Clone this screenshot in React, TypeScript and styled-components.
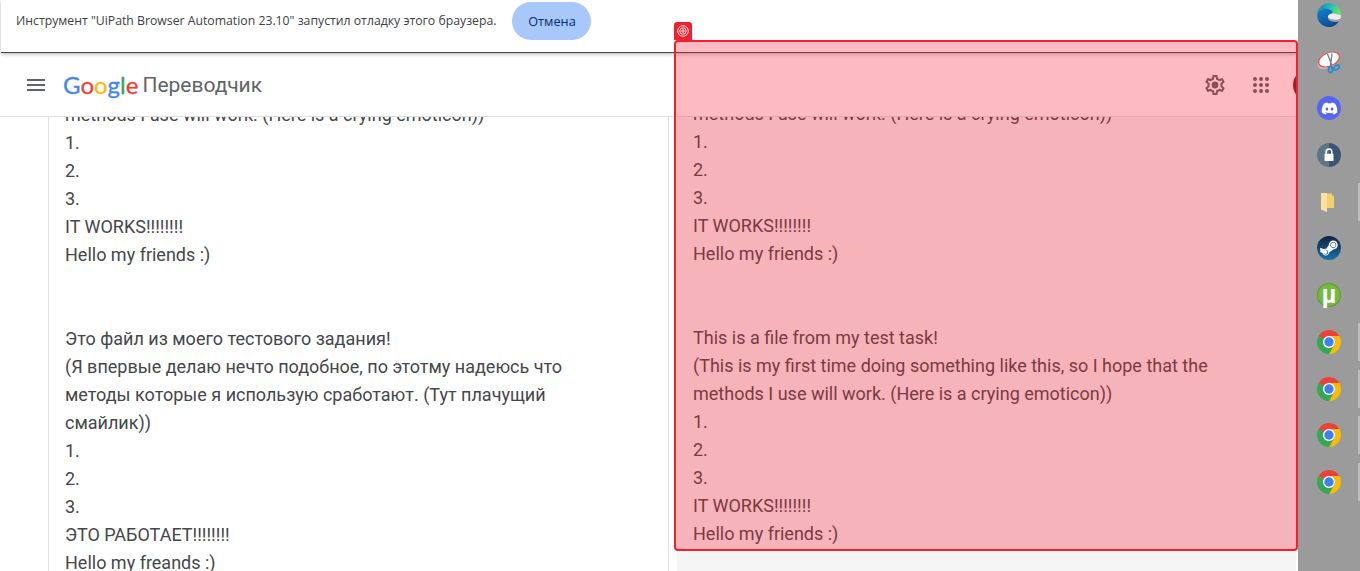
import React from "react"
import styled, { createGlobalStyle } from "styled-components"
import { FaDiscord, FaSteamSymbol } from "react-icons/fa"

const sourceText = `methods I use will work. (Here is a crying emoticon))
1.
2.
3.
IT WORKS!!!!!!!!
Hello my friends :)


Это файл из моего тестового задания!
(Я впервые делаю нечто подобное, по этотму надеюсь что методы которые я использую сработают. (Тут плачущий смайлик))
1.
2.
3.
ЭТО РАБОТАЕТ!!!!!!!!
Hello my freands :)`

const resultText = `methods I use will work. (Here is a crying emoticon))
1.
2.
3.
IT WORKS!!!!!!!!
Hello my friends :)


This is a file from my test task!
(This is my first time doing something like this, so I hope that the methods I use will work. (Here is a crying emoticon))
1.
2.
3.
IT WORKS!!!!!!!!
Hello my friends :)`

function Chrome() {
  return (
    <svg viewBox="0 0 24 24" width={24} height={24}>
      <path fill="#ea4335" d="M12 0A12 12 0 0 1 22.39 6H12A6 6 0 0 0 6.8 9L1.61 6A12 12 0 0 1 12 0Z" />
      <path fill="#fbbc04" d="M22.39 6A12 12 0 0 1 12 24L17.2 15A6 6 0 0 0 12 6Z" />
      <path fill="#34a853" d="M1.61 6A12 12 0 0 0 12 24L17.2 15A6 6 0 0 1 6.8 9Z" />
      <circle cx="12" cy="12" r="6" fill="#fff" />
      <circle cx="12" cy="12" r="4.7" fill="#3f80f0" />
    </svg>
  )
}

function Edge() {
  return (
    <svg viewBox="0 0 24 24" width={24} height={24}>
      <defs>
        <linearGradient id="edgeTop" x1="0" y1="0.2" x2="1" y2="0.6">
          <stop offset="0" stopColor="#1a7fb8" />
          <stop offset="0.55" stopColor="#2cc4b4" />
          <stop offset="1" stopColor="#74e25a" />
        </linearGradient>
        <linearGradient id="edgeLow" x1="0" y1="0" x2="0.6" y2="1">
          <stop offset="0" stopColor="#0f86d0" />
          <stop offset="1" stopColor="#0b4a92" />
        </linearGradient>
      </defs>
      <path fill="url(#edgeTop)" d="M12 0A12 12 0 0 1 24 12.5L10 13 .4 9.5A12 12 0 0 1 12 0Z" />
      <path fill="#e9eceb" d="M10.5 13C11.5 10 16 9.5 19 11L24 12.2 23.6 15.2C21.5 16.6 19 17.2 16.5 16.6 13.5 16.4 11 15.4 10.5 13Z" />
      <path fill="url(#edgeLow)" d="M0.2 11.5C1 7 6 4.8 10.5 5.8 15 6.8 16.6 9 15 10.2 12.5 10.6 11 12 10.8 14 10.6 17 13.4 19 18 19 19.6 19 21 18.6 22 18 19.8 22 16 24 12 24 5 24 -.2 18.4 0.2 11.5Z" />
    </svg>
  )
}

function Snip() {
  return (
    <svg viewBox="0 0 24 24" width={24} height={24}>
      <ellipse cx="10.5" cy="12" rx="10.5" ry="6.4" transform="rotate(-24 10.5 12)" fill="#c9bdbd" />
      <ellipse cx="12" cy="9.5" rx="11" ry="6.6" transform="rotate(-24 12 9.5)" fill="#fff" stroke="#e0564e" strokeWidth="1.2" />
      <path d="M10.5 4L15 15.5M15 3.5L13.5 15.5" stroke="#77797c" strokeWidth="1.3" fill="none" />
      <ellipse cx="13.4" cy="19.6" rx="2" ry="3" fill="none" stroke="#1f8ad6" strokeWidth="1.6" />
      <ellipse cx="19.4" cy="17.6" rx="3.2" ry="2" transform="rotate(-30 19.4 17.6)" fill="none" stroke="#1f8ad6" strokeWidth="1.6" />
    </svg>
  )
}

function Lock() {
  return (
    <svg viewBox="0 0 24 24" width={24} height={24}>
      <path fill="#5f7389" d="M12 0a12 12 0 0 0 0 24Z" />
      <path fill="#3b5570" d="M12 0a12 12 0 0 1 0 24Z" />
      <path fill="none" stroke="#fff" strokeWidth="1.6" d="M9.2 11V8.8a2.8 2.8 0 0 1 5.6 0V11" />
      <rect x="7.5" y="10.8" width="9" height="7.2" rx="0.8" fill="#fff" />
    </svg>
  )
}

function Folder() {
  return (
    <svg viewBox="0 0 24 24" width={24} height={24}>
      <path fill="#f3d06f" d="M9 3.5H15L15.5 6H17V18H9Z" />
      <path fill="#fbe39b" d="M4 3H10V22L4 19.5Z" />
    </svg>
  )
}

function Target() {
  return (
    <svg viewBox="0 0 12 12" width={12} height={12} fill="none" stroke="#fff" strokeWidth="0.9">
      <circle cx="6" cy="6" r="5.3" />
      <circle cx="6" cy="6" r="3.2" />
      <circle cx="6" cy="6" r="1.2" />
    </svg>
  )
}

export default function App() {
  return (
    <Desktop>
      <GlobalStyle />
      <Browser>
        <InfoBar>
          <InfoText>Инструмент "UiPath Browser Automation 23.10" запустил отладку этого браузера.</InfoText>
          <CancelButton>Отмена</CancelButton>
        </InfoBar>
        <Header>
          <MenuButton aria-label="Меню">
            <svg viewBox="0 0 18 12" width={18} height={12} fill="#5f6368">
              <rect y="0" width="18" height="2" />
              <rect y="5" width="18" height="2" />
              <rect y="10" width="18" height="2" />
            </svg>
          </MenuButton>
          <Logo>
            <LogoLetter $color="#4285f4">G</LogoLetter>
            <LogoLetter $color="#ea4335">o</LogoLetter>
            <LogoLetter $color="#fbbc05">o</LogoLetter>
            <LogoLetter $color="#4285f4">g</LogoLetter>
            <LogoLetter $color="#34a853">l</LogoLetter>
            <LogoLetter $color="#ea4335">e</LogoLetter>
          </Logo>
          <ProductName>Переводчик</ProductName>
          <HeaderActions>
            <svg viewBox="0 0 24 24" width={24} height={24} fill="#5f6368">
              <path d="M19.43 12.98c.04-.32.07-.64.07-.98 0-.34-.03-.66-.07-.98l2.11-1.65c.19-.15.24-.42.12-.64l-2-3.46c-.09-.16-.26-.25-.44-.25-.06 0-.12.01-.17.03l-2.49 1c-.52-.4-1.08-.73-1.69-.98l-.38-2.65C14.46 2.18 14.25 2 14 2h-4c-.25 0-.46.18-.49.42l-.38 2.65c-.61.25-1.17.59-1.69.98l-2.49-1c-.06-.02-.12-.03-.18-.03-.17 0-.34.09-.43.25l-2 3.46c-.13.22-.07.49.12.64l2.11 1.65c-.04.32-.07.65-.07.98 0 .33.03.66.07.98l-2.11 1.65c-.19.15-.24.42-.12.64l2 3.46c.09.16.26.25.44.25.06 0 .12-.01.17-.03l2.49-1c.52.4 1.08.73 1.69.98l.38 2.65c.03.24.24.42.49.42h4c.25 0 .46-.18.49-.42l.38-2.65c.61-.25 1.17-.59 1.69-.98l2.49 1c.06.02.12.03.18.03.17 0 .34-.09.43-.25l2-3.46c.12-.22.07-.49-.12-.64l-2.11-1.65zm-1.98-1.71c.04.31.05.52.05.73 0 .21-.02.43-.05.73l-.14 1.13.89.7 1.08.84-.7 1.21-1.27-.51-1.04-.42-.9.68c-.43.32-.84.56-1.25.73l-1.06.43-.16 1.13-.2 1.35h-1.4l-.19-1.35-.16-1.13-1.06-.43c-.43-.18-.83-.41-1.23-.71l-.91-.7-1.06.43-1.27.51-.7-1.21 1.08-.84.89-.7-.14-1.13c-.03-.31-.05-.54-.05-.74s.02-.43.05-.73l.14-1.13-.89-.7-1.08-.84.7-1.21 1.27.51 1.04.42.9-.68c.43-.32.84-.56 1.25-.73l1.06-.43.16-1.13.2-1.35h1.39l.19 1.35.16 1.13 1.06.43c.43.18.83.41 1.23.71l.91.7 1.06-.43 1.27-.51.7 1.21-1.07.85-.89.7.14 1.13z" />
              <circle cx="12" cy="12" r="3.4" />
            </svg>
            <svg viewBox="0 0 24 24" width={24} height={24} fill="#5f6368">
              {[6, 12, 18].flatMap((y) =>
                [6, 12, 18].map((x) => <circle key={`${x}-${y}`} cx={x} cy={y} r="2" />)
              )}
            </svg>
            <Avatar />
          </HeaderActions>
        </Header>
        <Workspace>
          <SourcePane>
            <Text $offset={-16}>{sourceText}</Text>
          </SourcePane>
          <ResultPane>
            <Text $offset={-17}>{resultText}</Text>
          </ResultPane>
        </Workspace>
        <Highlight>
          <HighlightTag>
            <Target />
          </HighlightTag>
        </Highlight>
      </Browser>
      <Dock>
        <DockItem>
          <Edge />
        </DockItem>
        <DockItem>
          <Snip />
        </DockItem>
        <DockItem>
          <DiscordDisc>
            <FaDiscord size={17} color="#fff" />
          </DiscordDisc>
        </DockItem>
        <DockItem>
          <Lock />
        </DockItem>
        <DockItem $open>
          <Folder />
        </DockItem>
        <DockItem>
          <SteamDisc>
            <FaSteamSymbol size={20} color="#fff" />
          </SteamDisc>
        </DockItem>
        <DockItem>
          <TorrentDisc>µ</TorrentDisc>
        </DockItem>
        <DockItem $open>
          <Chrome />
        </DockItem>
        <DockItem $open>
          <Chrome />
        </DockItem>
        <DockItem $open>
          <Chrome />
        </DockItem>
        <DockItem $open>
          <Chrome />
        </DockItem>
      </Dock>
    </Desktop>
  )
}

const GlobalStyle = createGlobalStyle`
  html, body {
    margin: 0;
    padding: 0;
    background: #fff;
  }
`

const Desktop = styled.div`
  width: 1360px;
  height: 571px;
  display: flex;
  overflow: hidden;
`

const Browser = styled.div`
  position: relative;
  width: 1298px;
  flex: none;
  display: flex;
  flex-direction: column;
  overflow: hidden;
  background: #fff;
`

const InfoBar = styled.div`
  position: relative;
  z-index: 2;
  flex: none;
  height: 52px;
  box-sizing: content-box;
  margin-left: 1px;
  padding-left: 15px;
  display: flex;
  align-items: flex-start;
  gap: 16px;
  background: #fff;
  border-bottom: 1px solid #444649;
  box-shadow: 0 1px 4px rgba(0, 0, 0, 0.3);
`

const InfoText = styled.span`
  font: 12.25px/42px "Open Sans", sans-serif;
  color: #3c4043;
`

const CancelButton = styled.button`
  width: 79px;
  height: 38px;
  margin-top: 2px;
  border: none;
  border-radius: 19px;
  padding: 0;
  background: #a8c7fa;
  color: #062e6f;
  font: 500 12.75px "Open Sans", sans-serif;
`

const Header = styled.header`
  position: relative;
  z-index: 1;
  flex: none;
  height: 63px;
  display: flex;
  align-items: center;
  padding-left: 27px;
  background: #fff;
  border-bottom: 1px solid #e0e0e0;
`

const MenuButton = styled.div`
  display: flex;
  margin-right: 18px;
`

const Logo = styled.div`
  font: 24px Lato, sans-serif;
  -webkit-text-stroke: 0.3px currentColor;
  margin-right: 4px;
`

const LogoLetter = styled.span<{ $color: string }>`
  color: ${(p) => p.$color};
`

const ProductName = styled.div`
  font: 21px Roboto, sans-serif;
  color: #5f6368;
`

const HeaderActions = styled.div`
  margin-left: auto;
  margin-right: -27px;
  display: flex;
  align-items: center;
  gap: 22px;
`

const Avatar = styled.div`
  width: 32px;
  height: 32px;
  margin-left: -2px;
  border-radius: 50%;
  background: #7a1f26;
`

const Workspace = styled.main`
  flex: 1;
  min-height: 0;
  display: flex;
  padding: 0 2px 0 48px;
`

const SourcePane = styled.section`
  width: 621px;
  flex: none;
  overflow: hidden;
  padding-left: 16px;
  box-sizing: border-box;
  border-left: 1px solid #e0e0e0;
  border-right: 1px solid #e0e0e0;
  margin-right: 8px;
`

const ResultPane = styled.section`
  flex: 1;
  overflow: hidden;
  padding-left: 16px;
  background: #f5f5f5;
`

const Text = styled.div<{ $offset: number }>`
  width: 540px;
  margin-top: ${(p) => p.$offset}px;
  font: 18px/28px Roboto, sans-serif;
  color: #44474a;
  white-space: pre-line;
`

const Highlight = styled.div`
  position: absolute;
  z-index: 3;
  left: 674px;
  top: 40px;
  width: 624px;
  height: 511px;
  box-sizing: border-box;
  border: 2px solid #f0202f;
  border-radius: 4px;
  background: rgba(250, 30, 50, 0.3);
`

const HighlightTag = styled.div`
  position: absolute;
  left: -2px;
  top: -20px;
  width: 18px;
  height: 18px;
  border-radius: 3px 3px 0 0;
  background: #f0202f;
  display: flex;
  align-items: center;
  justify-content: center;
`

const Dock = styled.aside`
  flex: 1;
  background: #9b9b9b;
  display: flex;
  flex-direction: column;
  gap: 22.7px;
  padding-top: 3px;
`

const DockItem = styled.div<{ $open?: boolean }>`
  position: relative;
  height: 24px;
  display: flex;
  justify-content: center;
  ${(p) =>
    p.$open &&
    `
    &::after {
      content: "";
      position: absolute;
      right: 0;
      top: -7px;
      width: 2px;
      height: 38px;
      background: #bdbdbd;
    }
  `}
`

const DiscordDisc = styled.div`
  width: 24px;
  height: 24px;
  border-radius: 50%;
  background: #5865f2;
  display: flex;
  align-items: center;
  justify-content: center;
`

const SteamDisc = styled.div`
  width: 24px;
  height: 24px;
  border-radius: 50%;
  background: linear-gradient(#101f40, #1673ab);
  display: flex;
  align-items: center;
  justify-content: center;
`

const TorrentDisc = styled.div`
  width: 24px;
  height: 24px;
  border-radius: 50%;
  background: #76b83f;
  box-shadow: inset 0 0 0 1px #5f9a32;
  color: #fff;
  text-align: center;
  font: 700 25px/23px "Liberation Sans", sans-serif;
`
